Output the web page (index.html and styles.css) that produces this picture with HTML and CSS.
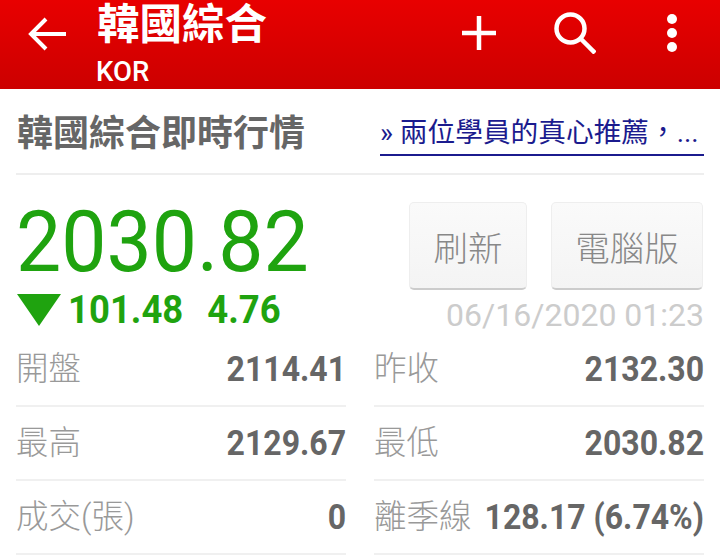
FILE: index.html
```html
<!DOCTYPE html>
<html lang="zh-Hant">
<head>
  <meta charset="UTF-8">
  <meta name="viewport" content="width=device-width, initial-scale=1.0">
  <title>韓國綜合即時行情</title>
  <link rel="stylesheet" href="styles.css">
</head>
<body>
  <header class="app-bar">
    <svg class="back-icon" width="40" height="40" viewBox="0 0 40 40"><path d="M39 20H4M19 5L4 20l15 15" fill="none" stroke="#fff" stroke-width="4"/></svg>
    <div class="app-title">
      <div class="title-main">韓國綜合</div>
      <div class="title-sub">KOR</div>
    </div>
    <div class="app-actions">
      <svg class="plus-icon" width="34" height="34" viewBox="0 0 34 34"><path d="M0 17h34M17 0v34" fill="none" stroke="#fff" stroke-width="4.5"/></svg>
      <svg class="search-icon" width="42" height="42" viewBox="0 0 42 42"><circle cx="16.5" cy="16.5" r="14" fill="none" stroke="#fff" stroke-width="4.5"/><path d="M26.500 26.500L41 41" fill="none" stroke="#fff" stroke-width="4.500"/></svg>
      <svg class="more-icon" width="12" height="38" viewBox="0 0 12 38"><circle cx="6" cy="5" r="5"/><circle cx="6" cy="19" r="5"/><circle cx="6" cy="33" r="5"/></svg>
    </div>
  </header>

  <main class="content">
    <section class="quote-head">
      <h1>韓國綜合即時行情</h1>
      <a class="promo" href="#">» 兩位學員的真心推薦，...</a>
    </section>

    <section class="price-box">
      <div class="price-left">
        <div class="price">2030.82</div>
        <div class="change">
          <span class="down-arrow"></span>
          <span>101.48</span>
          <span class="pct">4.76</span>
        </div>
      </div>
      <div class="price-right">
        <div class="buttons">
          <button class="btn btn-refresh">刷新</button>
          <button class="btn btn-desktop">電腦版</button>
        </div>
        <div class="stamp">06/16/2020 01:23</div>
      </div>
    </section>

    <section class="stats">
      <div class="stat"><span class="label">開盤</span><span class="value">2114.41</span></div>
      <div class="stat"><span class="label">昨收</span><span class="value">2132.30</span></div>
      <div class="stat"><span class="label">最高</span><span class="value">2129.67</span></div>
      <div class="stat"><span class="label">最低</span><span class="value">2030.82</span></div>
      <div class="stat"><span class="label">成交(張)</span><span class="value">0</span></div>
      <div class="stat"><span class="label">離季線</span><span class="value">128.17 (6.74%)</span></div>
    </section>
  </main>
</body>
</html>
```

FILE: styles.css
```css
html, body {
  margin: 0;
  height: 560px;
  overflow: hidden;
  background: #fff;
  font-family: Roboto, "Noto Sans CJK TC", sans-serif;
}

.app-bar {
  height: 89px;
  display: flex;
  align-items: flex-start;
  background: linear-gradient(#e80000, #cc0000);
  color: #fff;
}

.back-icon {
  margin: 14px 0 0 27px;
}

.app-title {
  margin-left: 30px;
}

.title-main {
  font-size: 42.5px;
  font-weight: 700;
  line-height: 50px;
}

.title-sub {
  font-size: 27.5px;
  font-weight: 500;
  line-height: 36px;
  margin: 4px 0 0 -1px;
}

.app-actions {
  margin-left: auto;
  display: flex;
  align-items: center;
  height: 66px;
  padding-right: 42px;
}

.plus-icon {
  margin-right: 58px;
}

.search-icon {
  margin-right: 70px;
}

.more-icon {
  fill: #fff;
}

.content {
  padding: 0 16px;
}

.quote-head {
  height: 84px;
  display: flex;
  justify-content: space-between;
  align-items: flex-start;
  border-bottom: 2px solid #eee;
}

.quote-head h1 {
  margin: 23px 0 0 1px;
  font-size: 36px;
  line-height: 44px;
  font-weight: 700;
  color: #666;
}

.promo {
  width: 324px;
  margin-top: 25px;
  height: 40px;
  border-bottom: 2px solid #1b1b8e;
  font-size: 27.7px;
  line-height: 38px;
  color: #1b1b8e;
  text-decoration: none;
  white-space: nowrap;
}

.price-box {
  display: flex;
  justify-content: space-between;
  height: 158px;
}

.price {
  margin-top: 24px;
  margin-bottom: 3px;
  font-size: 80.5px;
  line-height: 86px;
  color: #1fa30f;
  transform: scaleY(1.07);
}

.change {
  display: flex;
  align-items: center;
  font-size: 36.5px;
  font-weight: 700;
  line-height: 44px;
  color: #1fa30f;
}

.change span:not(.down-arrow) {
  transform: scaleY(1.06);
}

.down-arrow {
  width: 0;
  height: 0;
  margin: 0 7px 0 1px;
  border-left: 22px solid transparent;
  border-right: 22px solid transparent;
  border-top: 32px solid #1fa30f;
}

.pct {
  margin-left: 24px;
}

.price-right {
  display: flex;
  flex-direction: column;
  align-items: flex-end;
  padding-top: 27px;
}

.buttons {
  display: flex;
  gap: 24px;
  margin-right: 1px;
}

.btn {
  height: 88px;
  padding: 0;
  border: 1px solid #eee;
  border-bottom: 2px solid #ccc;
  border-radius: 5px;
  background: linear-gradient(#fafafa, #f4f4f4);
  color: #888;
  font-family: inherit;
  font-size: 34.5px;
  font-weight: 300;
}

.btn-refresh {
  width: 118px;
}

.btn-desktop {
  width: 152px;
}

.stamp {
  margin-top: 6px;
  font-size: 32px;
  line-height: 38px;
  color: #ccc;
  white-space: nowrap;
}

.stats {
  display: grid;
  grid-template-columns: 330px 330px;
  column-gap: 28px;
}

.stat {
  height: 72px;
  display: flex;
  justify-content: space-between;
  align-items: center;
  border-bottom: 2px solid #f0f0f0;
}

.label {
  font-size: 32.5px;
  color: #999;
  font-weight: 300;
  margin-top: -8px;
}

.value {
  font-size: 32px;
  font-weight: 700;
  color: #666;
  transform: scaleY(1.12);
  transform-origin: right center;
}
```
